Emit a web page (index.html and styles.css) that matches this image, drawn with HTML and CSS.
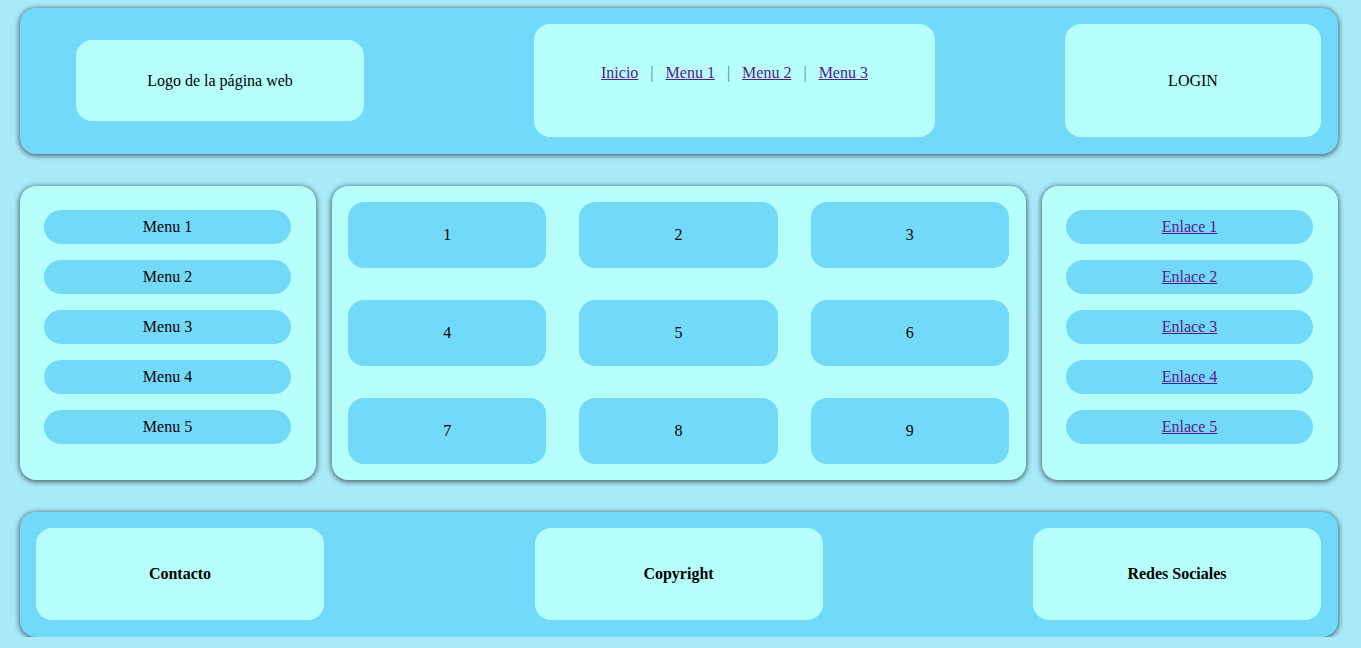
FILE: index.html
```html
<!DOCTYPE html>
<html lang="es">
<head>
<meta charset="utf-8">
<title>Maqueta</title>
<link rel="stylesheet" href="styles.css">
</head>
<body>
<div class="page">
  <header class="header card">
    <div class="logo">Logo de la página web</div>
    <nav class="nav">
      <a href="#">Inicio</a><span class="sep">|</span><a href="#">Menu 1</a><span class="sep">|</span><a href="#">Menu 2</a><span class="sep">|</span><a href="#">Menu 3</a>
    </nav>
    <div class="login">LOGIN</div>
  </header>

  <main class="middle">
    <aside class="side card">
      <div class="pill">Menu 1</div>
      <div class="pill">Menu 2</div>
      <div class="pill">Menu 3</div>
      <div class="pill">Menu 4</div>
      <div class="pill">Menu 5</div>
    </aside>
    <section class="content card">
      <div class="tile">1</div>
      <div class="tile">2</div>
      <div class="tile">3</div>
      <div class="tile">4</div>
      <div class="tile">5</div>
      <div class="tile">6</div>
      <div class="tile">7</div>
      <div class="tile">8</div>
      <div class="tile">9</div>
    </section>
    <aside class="side card">
      <div class="pill"><a href="#">Enlace 1</a></div>
      <div class="pill"><a href="#">Enlace 2</a></div>
      <div class="pill"><a href="#">Enlace 3</a></div>
      <div class="pill"><a href="#">Enlace 4</a></div>
      <div class="pill"><a href="#">Enlace 5</a></div>
    </aside>
  </main>

  <footer class="footer card">
    <div class="fbox">Contacto</div>
    <div class="fbox">Copyright</div>
    <div class="fbox">Redes Sociales</div>
  </footer>
</div>
</body>
</html>
```

FILE: styles.css
```css
html, body {
  margin: 0;
  padding: 0;
}
body {
  background: #a8e9fa;
  font-family: "Liberation Serif", "Times New Roman", serif;
  font-size: 16px;
  color: #000;
}
a {
  color: #551a8b;
}
.page {
  padding: 8px 23px 0 20px;
  display: flex;
  flex-direction: column;
  gap: 32px;
}
.card {
  border-radius: 16px;
  box-shadow: 0 1px 5px 1px rgba(0, 0, 0, 0.55);
}
.header {
  background: #73d9f9;
  height: 146px;
  box-sizing: border-box;
  padding: 16px 17px 17px 56px;
  display: flex;
  align-items: center;
}
.logo {
  width: 288px;
  height: 81px;
  background: #b7fffd;
  border-radius: 16px;
  display: flex;
  align-items: center;
  justify-content: center;
}
.nav {
  margin-left: 170px;
  width: 401px;
  height: 113px;
  box-sizing: border-box;
  padding-top: 40px;
  background: #b7fffd;
  border-radius: 16px;
  text-align: center;
  line-height: 18px;
}
.sep {
  color: #66788a;
  padding: 0 12px;
}
.login {
  margin-left: auto;
  width: 256px;
  height: 113px;
  background: #b7fffd;
  border-radius: 16px;
  display: flex;
  align-items: center;
  justify-content: center;
}
.middle {
  display: grid;
  grid-template-columns: 296px 1fr 296px;
  gap: 16px;
}
.side {
  background: #b7fffd;
  padding: 24px 25px 24px 24px;
  display: flex;
  flex-direction: column;
  gap: 16px;
}
.pill {
  height: 34px;
  background: #73d9f9;
  border-radius: 17px;
  display: flex;
  align-items: center;
  justify-content: center;
}
.content {
  background: #b7fffd;
  padding: 16px 17px 16px 16px;
  display: grid;
  grid-template-columns: repeat(3, 1fr);
  grid-template-rows: repeat(3, 66px);
  column-gap: 33px;
  row-gap: 32px;
}
.tile {
  background: #73d9f9;
  border-radius: 16px;
  display: flex;
  align-items: center;
  justify-content: center;
}
.footer {
  background: #73d9f9;
  height: 125px;
  box-sizing: border-box;
  padding: 16px 17px 17px 16px;
  display: flex;
  justify-content: space-between;
}
.fbox {
  width: 288px;
  background: #b7fffd;
  border-radius: 16px;
  display: flex;
  align-items: center;
  justify-content: center;
  font-weight: bold;
}
```
